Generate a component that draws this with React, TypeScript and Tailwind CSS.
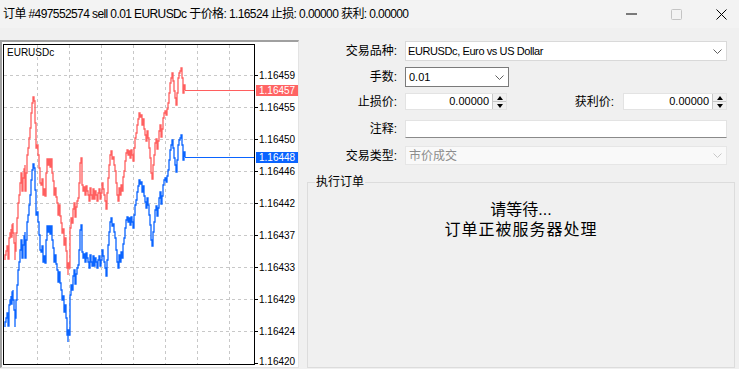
import React from "react";

// bid series (blue); ask (red) is the same shape shifted up by the spread
const BID: [number, number][] = [
  [5, 327], [5, 322], [6, 318], [7, 313], [8, 320], [8, 326], [9, 305], [10, 300], [11, 296], [11, 304],
  [12, 292], [13, 290], [13, 300], [14, 310], [15, 327], [15, 318], [16, 300], [17, 285], [18, 270], [19, 262],
  [20, 250], [21, 240], [22, 258], [23, 245], [24, 236], [25, 232], [25, 258], [26, 240], [27, 222], [28, 215],
  [29, 205], [30, 195], [31, 180], [32, 170], [33, 164], [34, 168], [35, 180], [35, 190], [36, 205], [36, 215],
  [37, 212], [38, 222], [39, 235], [40, 250], [41, 252], [42, 246], [43, 262], [44, 256], [45, 263], [46, 240],
  [47, 226], [48, 232], [49, 226], [50, 234], [51, 226], [52, 240], [53, 248], [54, 262], [55, 255], [56, 264],
  [57, 270], [58, 282], [59, 272], [60, 283], [61, 290], [62, 300], [63, 296], [64, 312], [65, 305], [66, 318],
  [67, 335], [68, 342], [68, 330], [69, 335], [70, 312], [70, 295], [71, 285], [72, 290], [73, 276], [74, 270],
  [75, 284], [76, 274], [77, 268], [78, 265], [79, 250], [80, 230], [81, 225], [82, 240], [82, 252], [83, 258],
  [84, 254], [85, 262], [86, 253], [87, 258], [88, 262], [89, 268], [90, 255], [91, 262], [92, 266], [93, 256],
  [94, 266], [95, 258], [96, 262], [97, 268], [98, 260], [99, 256], [100, 266], [101, 260], [102, 250], [103, 256],
  [104, 262], [105, 268], [106, 276], [107, 260], [108, 245], [109, 232], [110, 222], [111, 218], [112, 226], [113, 224],
  [114, 232], [115, 238], [116, 250], [117, 262], [118, 268], [119, 255], [120, 262], [121, 252], [122, 258], [123, 244],
  [124, 238], [125, 228], [126, 220], [127, 217], [128, 222], [129, 218], [130, 225], [131, 217], [132, 222], [133, 228],
  [134, 215], [135, 205], [136, 200], [137, 192], [138, 186], [139, 180], [140, 184], [141, 182], [142, 192], [143, 186],
  [144, 196], [145, 202], [146, 208], [147, 198], [148, 205], [149, 215], [150, 225], [151, 240], [152, 246], [153, 232],
  [154, 222], [155, 210], [156, 206], [157, 216], [158, 208], [159, 198], [160, 192], [161, 204], [162, 196], [163, 185],
  [164, 180], [165, 178], [166, 182], [167, 176], [168, 170], [169, 160], [170, 150], [171, 145], [172, 140], [173, 148],
  [174, 158], [175, 165], [176, 172], [177, 160], [178, 145], [179, 140], [180, 138], [181, 135], [182, 145], [183, 160],
  [184, 152], [185, 157],
];

const SPREAD = 67;

const stepPath = (pts: [number, number][], dy: number) => {
  let d = `M ${pts[0][0]} ${pts[0][1] + dy}`;
  for (const [x, y] of pts.slice(1)) d += ` H ${x} V ${y + dy}`;
  return d;
};

const levels = [
  { y: 75, label: "1.16459" },
  { y: 107, label: "1.16455" },
  { y: 139, label: "1.16450" },
  { y: 171, label: "1.16446" },
  { y: 203, label: "1.16442" },
  { y: 235, label: "1.16437" },
  { y: 267, label: "1.16433" },
  { y: 299, label: "1.16429" },
  { y: 331, label: "1.16424" },
];

const vlines = [37, 69, 101, 133, 165, 197, 229];

const TickChart = () => (
  <div className="w-[299px] h-[328px] mt-[12px] border-t-2 border-l-2 border-t-[#a0a0a0] border-l-[#a0a0a0] border-r border-b border-r-[#e3e3e3] border-b-[#e3e3e3] bg-white shrink-0">
    <svg width="296" height="325" viewBox="2 42 296 325" className="block">
      {levels.map((l) => (
        <line key={l.y} x1={4} x2={254} y1={l.y + 0.5} y2={l.y + 0.5} stroke="#c8c8c8" strokeDasharray="3 3" />
      ))}
      {vlines.map((x) => (
        <line key={x} x1={x + 0.5} x2={x + 0.5} y1={45} y2={364} stroke="#c8c8c8" strokeDasharray="3 3" />
      ))}
      <path d={stepPath(BID, -SPREAD)} fill="none" stroke="#ff5f5f" strokeWidth={1.3} />
      <path d={stepPath(BID, 0)} fill="none" stroke="#0a64ff" strokeWidth={1.3} />
      <line x1={185} x2={254} y1={90.5} y2={90.5} stroke="#ff5f5f" />
      <line x1={185} x2={254} y1={157.5} y2={157.5} stroke="#0a64ff" />
      <rect x={3.5} y={44.5} width={251} height={320} fill="none" stroke="#000" />
      {levels.map((l) => (
        <line key={"t" + l.y} x1={254} x2={258} y1={l.y + 0.5} y2={l.y + 0.5} stroke="#000" />
      ))}
      <line x1={254} x2={258} y1={363.5} y2={363.5} stroke="#000" />
      <g fontFamily="'Liberation Sans', Arial, sans-serif" fontSize="10" fill="#000">
        {levels.map((l) => (
          <text key={"l" + l.y} x={259} y={l.y + 4}>
            {l.label}
          </text>
        ))}
        <text x={259} y={365}>1.16420</text>
        <text x={7} y={56}>EURUSDc</text>
      </g>
      <rect x={256} y={85} width={42} height={11} fill="#ff6464" />
      <text x={259} y={94} fontFamily="'Liberation Sans', Arial, sans-serif" fontSize="10" fill="#fff">
        1.16457
      </text>
      <rect x={256} y={152} width={42} height={11} fill="#0a64ff" />
      <text x={259} y={161} fontFamily="'Liberation Sans', Arial, sans-serif" fontSize="10" fill="#fff">
        1.16448
      </text>
    </svg>
  </div>
);

const Chevron = ({ color = "#5f5f5f" }: { color?: string }) => (
  <svg width="9" height="5" viewBox="0 0 9 5">
    <path d="M0.5 0.5 L4.5 4.5 L8.5 0.5" fill="none" stroke={color} strokeWidth="1" />
  </svg>
);

const Spinner = ({ width }: { width: string }) => (
  <div className={`${width} h-[17px] bg-white border border-[#e3e3e3] flex items-stretch`}>
    <span className="flex-1 text-right pr-[3px] text-[11px] leading-[15px]">0.00000</span>
    <div className="w-[14px] border-l border-[#c8c8c8] bg-[#f0f0f0] flex flex-col">
      <div className="flex-1 flex items-center justify-center border-b border-[#c8c8c8]">
        <svg width="6" height="4" viewBox="0 0 6 4">
          <path d="M3 0 L6 4 L0 4 Z" fill="#000" />
        </svg>
      </div>
      <div className="flex-1 flex items-center justify-center">
        <svg width="6" height="4" viewBox="0 0 6 4">
          <path d="M0 0 L6 0 L3 4 Z" fill="#000" />
        </svg>
      </div>
    </div>
  </div>
);

const Label = ({ children }: { children: React.ReactNode }) => (
  <div className="w-[98px] text-right text-[12px] shrink-0">{children}</div>
);

export default function App() {
  return (
    <div
      className="w-[739px] h-[369px] bg-[#f0f0f0] overflow-hidden flex flex-col text-black"
      style={{ fontFamily: "'Liberation Sans', 'Noto Sans CJK SC', sans-serif" }}
    >
      <div className="h-[28px] bg-[#f3f3f3] flex items-center shrink-0">
        <span className="pl-[3px] text-[12px] tracking-[-0.6px] whitespace-nowrap">
          订单 #497552574 sell 0.01 EURUSDc 于价格: 1.16524 止损: 0.00000 获利: 0.00000
        </span>
        <div className="ml-auto mr-[-5px] flex h-full">
          <div className="w-[45px] flex items-center justify-center">
            <svg width="11" height="2" viewBox="0 0 11 2">
              <line x1="0" x2="11" y1="1" y2="1" stroke="#000" />
            </svg>
          </div>
          <div className="w-[45px] flex items-center justify-center">
            <svg width="11" height="11" viewBox="0 0 11 11">
              <rect x="0.5" y="0.5" width="10" height="10" rx="1" fill="none" stroke="#c4c4c4" />
            </svg>
          </div>
          <div className="w-[45px] flex items-center justify-center">
            <svg width="11" height="11" viewBox="0 0 11 11">
              <path d="M0.5 0.5 L10.5 10.5 M10.5 0.5 L0.5 10.5" stroke="#000" strokeWidth="1" />
            </svg>
          </div>
        </div>
      </div>

      <div className="flex flex-1 items-start">
        <TickChart />

        <div className="flex-1 flex flex-col pt-[13px] h-full">
          <div className="flex items-center h-[20px]">
            <Label>交易品种:</Label>
            <div className="ml-[8px] mr-[12px] flex-1 h-[20px] bg-white border border-[#d9d9d9] flex items-center pl-[2px] pr-[4px]">
              <span className="flex-1 text-[11px] tracking-[-0.4px]">EURUSDc, Euro vs US Dollar</span>
              <Chevron />
            </div>
          </div>

          <div className="flex items-center h-[20px] mt-[6px]">
            <Label>手数:</Label>
            <div className="ml-[8px] w-[104px] h-[20px] bg-white border border-[#7a7a7a] flex items-center pl-[3px] pr-[4px]">
              <span className="flex-1 text-[11px]">0.01</span>
              <Chevron />
            </div>
          </div>

          <div className="flex items-center h-[17px] mt-[6px]">
            <Label>止损价:</Label>
            <div className="ml-[8px]">
              <Spinner width="w-[102px]" />
            </div>
            <div className="flex-1 text-right text-[12px] pr-[9px]">获利价:</div>
            <div className="mr-[12px]">
              <Spinner width="w-[104px]" />
            </div>
          </div>

          <div className="flex items-center h-[18px] mt-[10px]">
            <Label>注释:</Label>
            <div className="ml-[8px] mr-[12px] flex-1 h-[18px] bg-white border border-[#e3e3e3] border-b-[#8a8a8a]" />
          </div>

          <div className="flex items-center h-[19px] mt-[8px]">
            <Label>交易类型:</Label>
            <div className="ml-[8px] mr-[12px] flex-1 h-[19px] bg-[#f9f9f9] border border-[#e6e6e6] flex items-center pl-[3px] pr-[4px]">
              <span className="flex-1 text-[12px] text-[#8c8c8c]">市价成交</span>
              <Chevron color="#c8c8c8" />
            </div>
          </div>

          <div className="relative mt-[17px] ml-[8px] mr-[4px] flex-1 mb-[1px] border border-[#dcdcdc] flex flex-col items-center pt-[17px]">
            <span className="absolute left-[7px] top-[-9px] px-[1px] bg-[#f0f0f0] text-[12px] leading-[16px]">
              执行订单
            </span>
            <div className="text-[16px] leading-[20px]">请等待...</div>
            <div className="text-[16px] leading-[20px] tracking-[1px]">订单正被服务器处理</div>
          </div>
        </div>
      </div>
    </div>
  );
}
